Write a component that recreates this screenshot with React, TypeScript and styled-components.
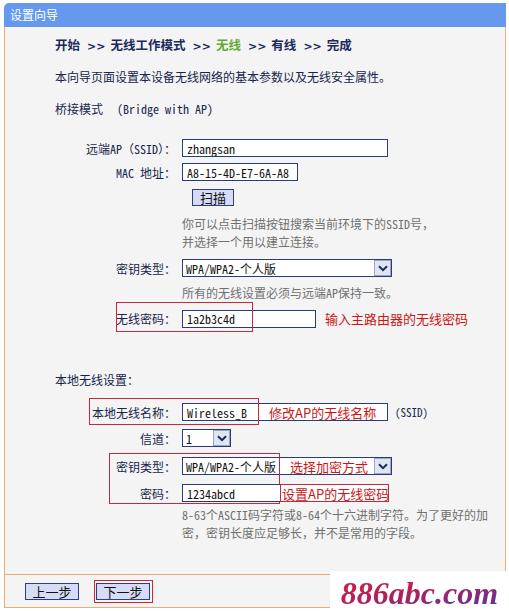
import React, { FC } from "react";
import styled, { createGlobalStyle } from "styled-components";

const SONG = `"Noto Sans Mono CJK SC", "Liberation Mono", "Noto Sans CJK SC", monospace`;
const HEI = `"Noto Sans CJK SC", "Liberation Sans", sans-serif`;

const GlobalStyle = createGlobalStyle`
    html, body {
        margin: 0;
        padding: 0;
        background: #ffffff;
    }
    body {
        font-family: ${HEI};
    }
`

const Page = styled.div`
    position: relative;
    width: 509px;
    height: 611px;
    padding: 3px 3px 0 4px;
    box-sizing: border-box;
    overflow: hidden;
`

const Panel = styled.div`
    width: 502px;
    display: flex;
    flex-direction: column;
`

const TitleBar = styled.div`
    height: 24px;
    background: #6699ee;
    border-top-left-radius: 5px;
    color: #ffffff;
    font-family: ${HEI};
    font-size: 12px;
    line-height: 24px;
    padding-left: 6px;
`

const Body = styled.div`
    height: 547px;
    box-sizing: border-box;
    background: #f4f4f4;
    border-left: 1px solid #e8b06a;
    border-right: 1px solid #e8b06a;
    padding-left: 50px;
    color: #18244c;
    font-family: ${SONG};
    font-size: 12px;
    overflow: hidden;
`

const Crumbs = styled.div`
    margin-top: 10px;
    line-height: 16px;
    font-family: ${HEI};
    font-size: 12.5px;
    font-weight: bold;
    color: #1b2a5e;
    white-space: nowrap;
`

const Step = styled.span<{ $active?: boolean }>`
    color: ${p => p.$active ? "#66aa33" : "#1b2a5e"};
`

const Sep = styled.span`
    margin: 0 5px 0 7px;
    font-family: "DejaVu Sans", sans-serif;
    font-size: 11px;
`

const Line = styled.div<{ $top: number }>`
    margin-top: ${p => p.$top}px;
    line-height: 16px;
    white-space: nowrap;
`

const Eng = styled.span`
    margin-left: 14px;
    font-family: ${SONG};
`

const Field = styled.div<{ $top: number }>`
    position: relative;
    display: grid;
    grid-template-columns: 121px auto;
    column-gap: 6px;
    align-items: center;
    height: 18px;
    margin-top: ${p => p.$top}px;
`

const Label = styled.div`
    text-align: right;
    white-space: nowrap;
    color: #18244c;
`

const Cell = styled.div<{ $gap?: number }>`
    display: flex;
    align-items: center;
    gap: ${p => p.$gap ?? 6}px;
`

const TextBox = styled.div<{ $w: number }>`
    width: ${p => p.$w}px;
    height: 18px;
    box-sizing: border-box;
    border: 1px solid #2a3c78;
    background: #ffffff;
    display: flex;
    align-items: center;
    padding-left: 4px;
    font-family: ${SONG};
    font-size: 12px;
    color: #111111;
    white-space: nowrap;
    overflow: hidden;
`

const Note = styled.span<{ $left?: number }>`
    margin-left: ${p => p.$left ?? 0}px;
    font-family: ${HEI};
    font-size: 13px;
    color: #cc1616;
    white-space: nowrap;
`

const NoteBox = styled.div`
    height: 18px;
    box-sizing: border-box;
    width: 109px;
    margin-left: -1px;
    border: 1px solid #c8283c;
    background: #ffffff;
    display: flex;
    align-items: center;
    padding-left: 1px;
    font-family: ${HEI};
    font-size: 13px;
    color: #cc1616;
    white-space: nowrap;
`

const SelectBox = styled.div<{ $w: number }>`
    width: ${p => p.$w}px;
    height: 18px;
    box-sizing: border-box;
    border: 1px solid #2a3c78;
    background: #ffffff;
    display: flex;
    align-items: stretch;
`

const SelectValue = styled.div`
    flex: 1;
    display: flex;
    align-items: center;
    padding-left: 3px;
    font-family: ${SONG};
    font-size: 12px;
    color: #111111;
    white-space: nowrap;
    overflow: hidden;
`

const Arrow = styled.div`
    width: 17px;
    box-sizing: border-box;
    border: 1px solid #9aa8c4;
    background: #dfe6f1;
    display: flex;
    align-items: center;
    justify-content: center;
`

const Suffix = styled.span`
    font-family: ${SONG};
    font-size: 11px;
    color: #18244c;
    margin-left: 1px;
`

const Button = styled.div<{ $w: number }>`
    width: ${p => p.$w}px;
    height: 17px;
    box-sizing: border-box;
    border: 1px solid #2b3f7a;
    background: #d6dbf6;
    color: #111111;
    font-family: ${HEI};
    font-size: 13px;
    line-height: 15px;
    text-align: center;
`

const ScanRow = styled.div`
    margin-top: 8px;
    padding-left: 137px;
    height: 18px;
`

const Hint = styled.div<{ $top: number }>`
    margin-top: ${p => p.$top}px;
    margin-left: 127px;
    line-height: 18px;
    color: #707070;
    white-space: nowrap;
`

const Highlight = styled.div<{ $l: number, $t: number, $w: number, $h: number }>`
    position: absolute;
    left: ${p => p.$l}px;
    top: ${p => p.$t}px;
    width: ${p => p.$w}px;
    height: ${p => p.$h}px;
    box-sizing: border-box;
    border: 1px solid #c8283c;
    pointer-events: none;
`

const Footer = styled.div`
    height: 34px;
    box-sizing: border-box;
    background: #f4f4f4;
    border: 1px solid #e8b06a;
    display: flex;
    align-items: center;
    gap: 15px;
    padding-left: 20px;
`

const ButtonFrame = styled.div`
    border: 1px solid #c8283c;
    padding: 2px 2px 2px 1px;
`

const Watermark = styled.div`
    position: absolute;
    right: 0;
    bottom: 0;
    width: 179px;
    height: 40px;
    background: #ffffff;
    display: flex;
    align-items: flex-end;
    justify-content: center;
    font-family: "Liberation Serif", serif;
    font-style: italic;
    font-weight: bold;
    font-size: 32px;
    line-height: 36px;
    span {
        background: linear-gradient(170deg, #d3263e 0%, #b51e58 45%, #4a3aa8 100%);
        -webkit-background-clip: text;
        background-clip: text;
        color: transparent;
    }
`

const Chevron = () => (
    <svg width="10" height="7" viewBox="0 0 10 7">
        <path d="M1 1.2 L5 5.2 L9 1.2" fill="none" stroke="#1b2a5e" strokeWidth="2" />
    </svg>
)

const Select: FC<{ w: number, value: string, children?: React.ReactNode }> = ({ w, value, children }) => (
    <SelectBox $w={w}>
        <SelectValue>{value}{children}</SelectValue>
        <Arrow><Chevron /></Arrow>
    </SelectBox>
)

const App = () => {
    const steps = ["开始", "无线工作模式", "无线", "有线", "完成"];

    return (
        <Page>
            <GlobalStyle />
            <Panel>
                <TitleBar>设置向导</TitleBar>
                <Body>
                    <Crumbs>
                        {steps.map((s, i) => (
                            <React.Fragment key={s}>
                                {i > 0 && <Sep>&gt;&gt;</Sep>}
                                <Step $active={s === "无线"}>{s}</Step>
                            </React.Fragment>
                        ))}
                    </Crumbs>
                    <Line $top={14}>本向导页面设置本设备无线网络的基本参数以及无线安全属性。</Line>
                    <Line $top={16}>桥接模式<Eng>(Bridge with AP)</Eng></Line>

                    <Field $top={22}>
                        <Label>远端AP（SSID）：</Label>
                        <Cell><TextBox $w={206}>zhangsan</TextBox></Cell>
                    </Field>
                    <Field $top={6}>
                        <Label>MAC 地址：</Label>
                        <Cell><TextBox $w={116}>A8-15-4D-E7-6A-A8</TextBox></Cell>
                    </Field>
                    <ScanRow><Button $w={42}>扫描</Button></ScanRow>
                    <Hint $top={8}>
                        你可以点击扫描按钮搜索当前环境下的SSID号，<br />
                        并选择一个用以建立连接。
                    </Hint>
                    <Field $top={8}>
                        <Label>密钥类型：</Label>
                        <Cell><Select w={210} value="WPA/WPA2-个人版" /></Cell>
                    </Field>
                    <Hint $top={7}>所有的无线设置必须与远端AP保持一致。</Hint>
                    <Field $top={7}>
                        <Label>无线密码：</Label>
                        <Cell>
                            <TextBox $w={134}>1a2b3c4d</TextBox>
                            <Note $left={3}>输入主路由器的无线密码</Note>
                        </Cell>
                        <Highlight $l={61} $t={-7} $w={137} $h={30} />
                    </Field>

                    <Line $top={45}>本地无线设置：</Line>

                    <Field $top={15}>
                        <Label>本地无线名称：</Label>
                        <Cell>
                            <TextBox $w={206}>
                                Wireless_B<Note $left={22}>修改AP的无线名称</Note>
                            </TextBox>
                            <Suffix>(SSID)</Suffix>
                        </Cell>
                        <Highlight $l={34} $t={-5} $w={170} $h={27} />
                    </Field>
                    <Field $top={8}>
                        <Label>信道：</Label>
                        <Cell><Select w={49} value="1" /></Cell>
                    </Field>
                    <Field $top={10}>
                        <Label>密钥类型：</Label>
                        <Cell>
                            <Select w={210} value="WPA/WPA2-个人版">
                                <Note $left={14}>选择加密方式</Note>
                            </Select>
                        </Cell>
                        <Highlight $l={54} $t={-4} $w={171} $h={51} />
                    </Field>
                    <Field $top={9}>
                        <Label>密码：</Label>
                        <Cell $gap={0}>
                            <TextBox $w={99}>1234abcd</TextBox>
                            <NoteBox>设置AP的无线密码</NoteBox>
                        </Cell>
                    </Field>
                    <Hint $top={4}>
                        8-63个ASCII码字符或8-64个十六进制字符。为了更好的加<br />
                        密，密钥长度应足够长，并不是常用的字段。
                    </Hint>
                </Body>
                <Footer>
                    <Button $w={54}>上一步</Button>
                    <ButtonFrame><Button $w={54}>下一步</Button></ButtonFrame>
                </Footer>
            </Panel>
            <Watermark><span>886abc.com</span></Watermark>
        </Page>
    )
}

export default App;
